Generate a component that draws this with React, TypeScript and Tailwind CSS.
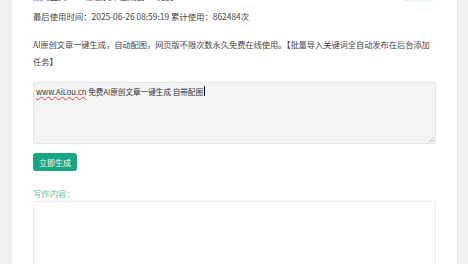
export default function App() {
  const font = { fontFamily: '"Microsoft YaHei", "Noto Sans CJK SC", "Noto Sans", sans-serif' };
  return (
    <div
      className="flex h-[264px] w-[468px] overflow-hidden bg-[#f0f0f0] text-[8.4px] leading-[17px] text-[#444]"
      style={font}
    >
      <div className="w-[12px] shrink-0" />
      <div className="flex-1 bg-white pl-[21px] pr-[21px]">
        {/* cut-off row above */}
        <div className="-mt-[12px] flex h-[17px] items-end justify-between">
          <span>热门工具 · AI原创文章生成器 · 免费</span>
          <span className="mb-[4px] mr-[2px] h-[13px] w-[31px] rounded-[2px] bg-[#e3f6ef]" />
        </div>

        <p className="mt-[2.5px]">最后使用时间：2025-06-26 08:59:19 累计使用：862484次</p>

        <p className="mt-[11px] text-[8.25px] tracking-[-0.05px]">
          AI原创文章一键生成，自动配图，网页版不限次数永久免费在线使用。【批量导入关键词全自动发布在后台添加任务】
        </p>

        <div className="relative mt-[12.5px] h-[62px] rounded-[2px] border border-[#e6e6e6] bg-[#f4f4f4] px-[2px] pt-[1px] text-[7.6px] leading-[16px] text-[#333]">
          <span className="underline decoration-[#e33] decoration-wavy decoration-[0.8px] underline-offset-[1px]">
            www.AiLou.cn
          </span>{" "}
          免费AI原创文章一键生成 自带配图
          <span className="ml-[1px] inline-block h-[10px] w-[1px] translate-y-[1px] bg-black" />
          <svg className="absolute bottom-[1px] right-[1px]" width="6" height="6" viewBox="0 0 6 6">
            <path d="M1 6L6 1M3.5 6L6 3.5" stroke="#aaa" strokeWidth="0.8" />
          </svg>
        </div>

        <button className="mt-[9px] flex h-[18px] w-[44px] items-center justify-center rounded-[3px] bg-[#16a683] text-[8px] text-white">
          立即生成
        </button>

        <p className="mt-[14px] leading-[16px] text-[#5fc4a1]">写作内容：</p>

        <div className="h-[80px] rounded-[2px] border border-[#ebebeb] bg-white" />
      </div>
      <div className="w-[11px] shrink-0 border-l border-[#e2e2e2] bg-[#f1f1f1]" />
    </div>
  );
}
